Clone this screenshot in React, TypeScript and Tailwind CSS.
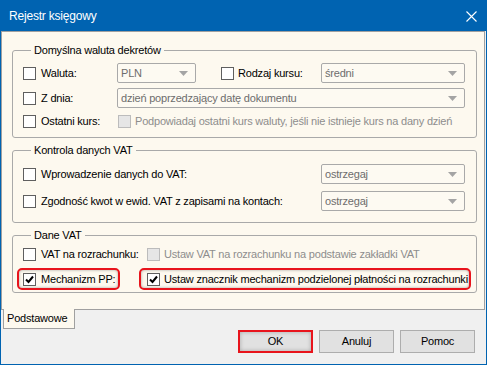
import React from "react";

const font = "font-['Liberation_Sans',Arial,sans-serif]";

function Check({ checked = false, disabled = false }: { checked?: boolean; disabled?: boolean }) {
  return (
    <span
      className={
        "w-[13px] h-[13px] shrink-0 flex items-center justify-center border " +
        (disabled ? "border-[#bcbcbc] bg-[#e6e6e6]" : "border-[#5f5f5f] bg-white")
      }
    >
      {checked && (
        <svg width="9" height="9" viewBox="0 0 9 9">
          <path d="M1 4.5 L3.5 7 L8 1.5" fill="none" stroke="#000" strokeWidth="2" />
        </svg>
      )}
    </span>
  );
}

function Combo({ value, className }: { value: string; className: string }) {
  return (
    <div
      className={
        "h-[20px] border border-[#a9a9a9] rounded-[2px] bg-[#fdfaf2] flex items-center justify-between pl-[3px] pr-[7px] text-[#6d6d6d] " +
        className
      }
    >
      <span>{value}</span>
      <svg width="9" height="5" viewBox="0 0 9 5">
        <path d="M0 0 H9 L4.5 5 Z" fill="#a4a4a4" />
      </svg>
    </div>
  );
}

function Group({ title, className, children }: { title: string; className: string; children: React.ReactNode }) {
  return (
    <fieldset className={"ml-[10px] w-[465px] border border-[#a9a9a9] rounded-[3px] pl-[10px] " + className}>
      <legend className="ml-[8px] px-[3px] leading-[14px]">{title}</legend>
      {children}
    </fieldset>
  );
}

export default function App() {
  return (
    <div
      className={
        "w-[487px] h-[365px] border border-[#0063b1] bg-[#f0f0f0] flex flex-col text-[11px] tracking-[-0.2px] text-black " +
        font
      }
    >
      {/* title bar */}
      <div className="h-[30px] shrink-0 bg-[#0063b1] flex items-center justify-between pl-[8px] pr-[9px] text-white text-[12px]">
        <span>Rejestr księgowy</span>
        <svg width="11" height="11" viewBox="0 0 11 11">
          <path d="M0.5 0.5 L10.5 10.5 M10.5 0.5 L0.5 10.5" stroke="#fff" strokeWidth="1.1" />
        </svg>
      </div>

      {/* panel */}
      <div className="h-[279px] shrink-0 mr-[1px] border border-[#a0a0a0] bg-[#fdf9ef] pt-[11px]">
        <Group title="Domyślna waluta dekretów" className="pt-[6px] pb-[6px]">
          <div className="flex items-center h-[20px]">
            <label className="w-[94px] flex items-center gap-[5px]">
              <Check />
              <span>Waluta:</span>
            </label>
            <Combo value="PLN" className="w-[79px]" />
            <label className="ml-[25px] w-[100px] flex items-center gap-[4px]">
              <Check />
              <span>Rodzaj kursu:</span>
            </label>
            <Combo value="średni" className="w-[144px]" />
          </div>
          <div className="flex items-center h-[20px] mt-[5px]">
            <label className="w-[94px] flex items-center gap-[5px]">
              <Check />
              <span>Z dnia:</span>
            </label>
            <Combo value="dzień poprzedzający datę dokumentu" className="w-[348px]" />
          </div>
          <div className="flex items-center h-[20px] mt-[3px]">
            <label className="w-[95px] flex items-center gap-[5px]">
              <Check />
              <span>Ostatni kurs:</span>
            </label>
            <Check disabled />
            <span className="ml-[4px] text-[#8d8d8d]">
              Podpowiadaj ostatni kurs waluty, jeśli nie istnieje kurs na dany dzień
            </span>
          </div>
        </Group>

        <Group title="Kontrola danych VAT" className="mt-[5px] pt-[7px] pb-[11px]">
          <div className="flex items-center h-[20px]">
            <label className="w-[298px] flex items-center gap-[5px]">
              <Check />
              <span>Wprowadzenie danych do VAT:</span>
            </label>
            <Combo value="ostrzegaj" className="w-[144px]" />
          </div>
          <div className="flex items-center h-[20px] mt-[7px]">
            <label className="w-[298px] flex items-center gap-[5px]">
              <Check />
              <span>Zgodność kwot w ewid. VAT z zapisami na kontach:</span>
            </label>
            <Combo value="ostrzegaj" className="w-[144px]" />
          </div>
        </Group>

        <Group title="Dane VAT" className="mt-[5px] pt-[2px] pb-[2px]">
          <div className="flex items-center h-[20px]">
            <label className="w-[124px] flex items-center gap-[5px]">
              <Check />
              <span>VAT na rozrachunku:</span>
            </label>
            <Check disabled />
            <span className="ml-[4px] text-[#8d8d8d]">Ustaw VAT na rozrachunku na podstawie zakładki VAT</span>
          </div>
          <div className="flex items-center h-[22px] mt-[4px] -ml-[6px]">
            <label className="w-[103px] h-[22px] flex items-center gap-[5px] pl-[4px] border-2 border-[#e8141c] rounded-[5px] shadow-[inset_0_0_3px_rgba(0,0,0,0.35)]">
              <Check checked />
              <span>Mechanizm PP:</span>
            </label>
            <label className="ml-[19px] w-[332px] h-[22px] flex items-center gap-[4px] pl-[6px] border-2 border-[#e8141c] rounded-[5px] shadow-[inset_0_0_3px_rgba(0,0,0,0.35)]">
              <Check checked />
              <span>Ustaw znacznik mechanizm podzielonej płatności na rozrachunki</span>
            </label>
          </div>
        </Group>
      </div>

      {/* tab */}
      <div className="ml-[2px] -mt-[1px] w-[72px] h-[20px] border border-t-0 border-[#a0a0a0] bg-[#fdf9ef] flex items-center pl-[3px]">
        Podstawowe
      </div>

      {/* buttons */}
      <div className="mt-[1px] flex justify-end gap-[6px] pr-[11px]">
        <button className="w-[75px] h-[23px] border-2 border-[#e8141c] bg-[#e1e1e1] shadow-[inset_0_0_4px_rgba(0,0,0,0.25)]">
          OK
        </button>
        <button className="w-[75px] h-[23px] border border-[#adadad] bg-[#e1e1e1]">Anuluj</button>
        <button className="w-[75px] h-[23px] border border-[#adadad] bg-[#e1e1e1]">Pomoc</button>
      </div>
    </div>
  );
}
